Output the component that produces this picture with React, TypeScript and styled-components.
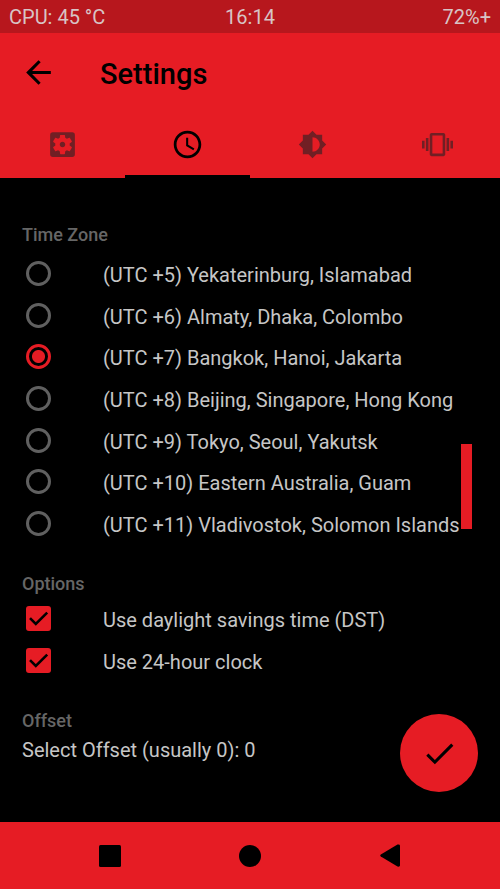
import React, { useState } from "react";
import styled, { createGlobalStyle } from "styled-components";
import {
  MdArrowBack,
  MdAccessTime,
  MdBrightness6,
  MdCheck,
  MdSettingsApplications,
  MdVibration,
} from "react-icons/md";

const red = "#e61c24";
const text = "#c6c6c6";

const GlobalStyle = createGlobalStyle`
  * { box-sizing: border-box; }
  body {
    margin: 0;
    background: #000;
    color: ${text};
    font-family: Roboto, "Liberation Sans", sans-serif;
  }
  button, input { font: inherit; margin: 0; padding: 0; }
  button { border: 0; background: none; color: inherit; cursor: pointer; }
`;

const Screen = styled.div`
  min-height: 100vh;
  display: flex;
  flex-direction: column;
`;

const StatusBar = styled.div`
  display: grid;
  grid-template-columns: 1fr auto 1fr;
  height: 33px;
  padding: 0 9px;
  background: #b7171d;
  color: #d8c4c5;
  font-size: 20px;
  line-height: 34px;
`;

const StatusEnd = styled.span`
  text-align: right;
`;

const Header = styled.header`
  background: ${red};
  color: #000;
`;

const TitleBar = styled.div`
  display: flex;
  align-items: center;
  height: 78px;
  padding-left: 20px;
`;

const BackButton = styled.button`
  display: flex;
  width: 80px;
`;

const Title = styled.h1`
  margin: 0;
  padding-top: 4px;
  font-size: 29px;
  line-height: 36px;
  font-weight: 500;
`;

const Tabs = styled.div`
  display: grid;
  grid-template-columns: repeat(4, 1fr);
  height: 67px;
`;

const Tab = styled.button<{ $active: boolean }>`
  display: flex;
  align-items: center;
  justify-content: center;
  padding-top: 2px;
  border-bottom: 3px solid ${(p) => (p.$active ? "#000" : "transparent")};
  color: ${(p) => (p.$active ? "#000" : "#711f24")};
`;

const Content = styled.main`
  position: relative;
  flex: 1;
  padding: 43px 22px 52px;
`;

const Group = styled.fieldset`
  position: relative;
  min-width: 0;
  margin: 0 0 24px;
  padding: 0;
  border: 0;
`;

const GroupTitle = styled.legend`
  padding: 0;
  color: #666;
  font-size: 18px;
  line-height: 27px;
  font-weight: 500;
`;

const ZoneList = styled.div`
  display: grid;
  grid-auto-rows: 1fr;
  min-height: 292px;
  margin-top: 6px;
`;

const OptionList = styled.div`
  display: grid;
  grid-auto-rows: 42px;
  margin-top: 2px;
`;

const Row = styled.label`
  display: grid;
  grid-template-columns: 81px 1fr;
  align-items: center;
  font-size: 20px;
  line-height: 28px;
  white-space: nowrap;
  cursor: pointer;
`;

const ControlBox = styled.span`
  display: grid;
  justify-items: start;
  padding: 0 0 3px 4px;

  > * {
    grid-area: 1 / 1;
  }
`;

const Radio = styled.input`
  appearance: none;
  width: 25px;
  height: 25px;
  border: 3px solid #606060;
  border-radius: 50%;

  &:checked {
    border-color: ${red};
    background: radial-gradient(circle, ${red} 6px, transparent 7px);
  }
`;

const Checkbox = styled.input`
  appearance: none;
  width: 25px;
  height: 25px;
  border: 3px solid #606060;
  border-radius: 3px;

  &:checked {
    border: 0;
    background: ${red};
  }
  &:not(:checked) + svg {
    display: none;
  }
`;

const Tick = styled.svg`
  pointer-events: none;
`;

const ScrollThumb = styled.div`
  position: absolute;
  right: 6px;
  bottom: 17px;
  width: 11px;
  height: 85px;
  background: ${red};
`;

const SectionTitle = styled.h2`
  margin: 0;
  color: #666;
  font-size: 18px;
  line-height: 27px;
  font-weight: 500;
`;

const OffsetButton = styled.button`
  display: block;
  font-size: 20px;
  line-height: 32px;
`;

const Fab = styled.button`
  position: absolute;
  right: 22px;
  bottom: 30px;
  display: flex;
  align-items: center;
  justify-content: center;
  width: 78px;
  height: 78px;
  border-radius: 50%;
  background: ${red};
  color: #000;
`;

const NavBar = styled.nav`
  display: grid;
  grid-template-columns: repeat(3, 140px);
  justify-content: center;
  height: 67px;
  background: ${red};
  color: #000;
`;

const NavButton = styled.button`
  display: flex;
  align-items: center;
  justify-content: center;
`;

const tabs = [
  { label: "General", icon: <MdSettingsApplications size={33} /> },
  { label: "Time", icon: <MdAccessTime size={33} /> },
  { label: "Brightness", icon: <MdBrightness6 size={29} /> },
  { label: "Vibration", icon: <MdVibration size={31} /> },
];

const zones = [
  "(UTC +5) Yekaterinburg, Islamabad",
  "(UTC +6) Almaty, Dhaka, Colombo",
  "(UTC +7) Bangkok, Hanoi, Jakarta",
  "(UTC +8) Beijing, Singapore, Hong Kong",
  "(UTC +9) Tokyo, Seoul, Yakutsk",
  "(UTC +10) Eastern Australia, Guam",
  "(UTC +11) Vladivostok, Solomon Islands",
];

const options = ["Use daylight savings time (DST)", "Use 24-hour clock"];

export default function App() {
  const [tab, setTab] = useState(1);
  const [zone, setZone] = useState(2);

  return (
    <Screen>
      <GlobalStyle />
      <StatusBar>
        <span>CPU: 45 °C</span>
        <span>16:14</span>
        <StatusEnd>72%+</StatusEnd>
      </StatusBar>
      <Header>
        <TitleBar>
          <BackButton aria-label="Back">
            <MdArrowBack size={37} />
          </BackButton>
          <Title>Settings</Title>
        </TitleBar>
        <Tabs role="tablist">
          {tabs.map((t, i) => (
            <Tab
              key={t.label}
              role="tab"
              aria-label={t.label}
              aria-selected={tab === i}
              $active={tab === i}
              onClick={() => setTab(i)}
            >
              {t.icon}
            </Tab>
          ))}
        </Tabs>
      </Header>
      <Content>
        <Group>
          <GroupTitle>Time Zone</GroupTitle>
          <ZoneList>
            {zones.map((z, i) => (
              <Row key={z}>
                <ControlBox>
                  <Radio type="radio" name="zone" checked={zone === i} onChange={() => setZone(i)} />
                </ControlBox>
                {z}
              </Row>
            ))}
          </ZoneList>
          <ScrollThumb />
        </Group>
        <Group>
          <GroupTitle>Options</GroupTitle>
          <OptionList>
            {options.map((o) => (
              <Row key={o}>
                <ControlBox>
                  <Checkbox type="checkbox" defaultChecked />
                  <Tick width="25" height="25" viewBox="0 0 25 25" fill="none" stroke="#000" strokeWidth="2.6">
                    <path d="M4 12.2 L9.8 18 L21.2 6.6" />
                  </Tick>
                </ControlBox>
                {o}
              </Row>
            ))}
          </OptionList>
        </Group>
        <SectionTitle>Offset</SectionTitle>
        <OffsetButton>Select Offset (usually 0): 0</OffsetButton>
        <Fab aria-label="Save">
          <MdCheck size={37} />
        </Fab>
      </Content>
      <NavBar>
        <NavButton aria-label="Recent apps">
          <svg width="22" height="22" viewBox="0 0 22 22">
            <rect width="22" height="22" rx="1.5" />
          </svg>
        </NavButton>
        <NavButton aria-label="Home">
          <svg width="22" height="22" viewBox="0 0 22 22">
            <circle cx="11" cy="11" r="11" />
          </svg>
        </NavButton>
        <NavButton aria-label="Back">
          <svg width="20" height="23" viewBox="0 0 20 23">
            <path d="M.8 10.5 17.5.5Q20 0 20 1.5v20q0 1.500-2.500 1L.8 12.500Q-.3 11.500.8 10.500z" />
          </svg>
        </NavButton>
      </NavBar>
    </Screen>
  );
}
